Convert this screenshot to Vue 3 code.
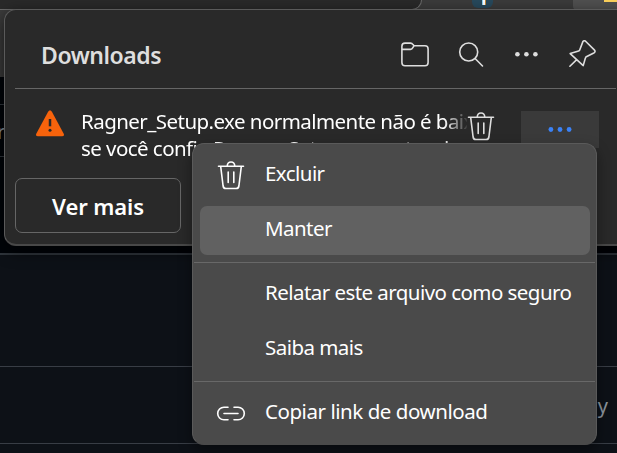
<script setup>
const headerIcons = ['folder', 'search', 'more', 'pin']
const menu = [
  { label: 'Excluir', icon: 'trash' },
  { label: 'Manter', active: true },
  { divider: true },
  { label: 'Relatar este arquivo como seguro' },
  { label: 'Saiba mais' },
  { divider: true },
  { label: 'Copiar link de download', icon: 'link', wide: true },
]
</script>

<template>
  <div class="screen">
    <div class="browser">
      <div class="address"></div>
      <div class="ext"><i></i></div>
      <div class="tab"><i></i></div>
    </div>
    <div class="page-head"><div class="band first"></div><div class="band second">r</div><div class="band third"></div></div>
    <div class="page-body">
      <div class="line-row tall"></div>
      <div class="line-row"><span>y</span></div>
    </div>

    <section class="panel">
      <header class="head">
        <h1>Downloads</h1>
        <nav class="tools">
          <template v-for="name in headerIcons" :key="name">
            <svg v-if="name === 'folder'" width="30" height="30" viewBox="0 0 30 30" class="stroke">
              <path d="M1.9 6.2Q1.9 3.1 5 3.1H10.5Q12 3.1 13 4.6L14 5.8H25Q28.1 5.8 28.1 8.9V22.5Q28.1 25.8 25 25.8H5Q1.9 25.8 1.9 22.5ZM1.9 9.4H10.5Q12 9.4 13 7.4L14 5.8" />
            </svg>
            <svg v-else-if="name === 'search'" width="30" height="30" viewBox="0 0 30 30" class="stroke">
              <circle cx="12.7" cy="12" r="9" /><path d="M19.1 18.5L26.5 26" />
            </svg>
            <svg v-else-if="name === 'more'" width="30" height="30" viewBox="0 0 30 30" class="dots">
              <circle cx="5.4" cy="14.3" r="2.3" /><circle cx="14.4" cy="14.3" r="2.3" /><circle cx="23.4" cy="14.3" r="2.3" />
            </svg>
            <svg v-else width="30" height="30" viewBox="0 0 30 30" class="stroke">
              <path d="M14.9 1.6Q16.3 -.1 18.1 1.7L26.3 9.9Q28 11.8 25.8 13L18.3 16.8Q17.6 17.2 17.4 18L15.2 25.6L2.2 13.6L10.6 11Q11.4 10.8 11.7 10ZM11.7 10L14.9 1.6M8.7 19.6L1.9 26.2" />
            </svg>
          </template>
        </nav>
      </header>

      <div class="item">
        <svg class="warn" width="28" height="28" viewBox="0 0 28 28">
          <path d="M12.1 1.8Q14 -1.2 15.9 1.8L27.6 23.4Q28.9 26.3 26 26.3H2Q-.9 26.3 .4 23.4Z" />
          <path class="mark" d="M14 9V16.3" /><circle class="dot" cx="14" cy="20.3" r="1.5" />
        </svg>
        <div class="message">
          <div class="line">Ragner_Setup.exe normalmente não é baixado.</div>
          <div class="line">se você confia Ragner_Setup.exe antes de</div>
        </div>
        <svg class="trash stroke" width="28" height="32" viewBox="0 0 28 32">
          <path d="M1.5 6.2H26.5M10.2 6Q10.5 2 14 2T17.8 6M3.7 6.5L6.1 26Q6.5 28.5 8.8 28.5H19.2Q21.5 28.5 21.9 26L24.3 6.5M11.2 12V22.5M16.8 12V22.5" />
        </svg>
        <button class="more">
          <svg width="30" height="30" viewBox="0 0 30 30"><circle cx="5.9" cy="14.5" r="2.4" /><circle cx="15" cy="14.5" r="2.4" /><circle cx="24.1" cy="14.5" r="2.4" /></svg>
        </button>
      </div>
      <button class="see"><span>Ver mais</span></button>
    </section>

    <div class="menu">
      <template v-for="(m, i) in menu" :key="i">
        <div v-if="m.divider" class="divider"></div>
        <div v-else class="option" :class="{ active: m.active, wide: m.wide }">
          <div class="glyph">
            <svg v-if="m.icon === 'trash'" class="stroke bin" width="28" height="32" viewBox="0 0 28 32">
              <path d="M1.5 6.2H26.5M10.2 6Q10.5 2 14 2T17.8 6M3.7 6.5L6.1 26Q6.5 28.5 8.8 28.5H19.2Q21.5 28.5 21.9 26L24.3 6.5M11.2 12V22.5M16.8 12V22.5" />
            </svg>
            <svg v-else-if="m.icon === 'link'" class="stroke" width="30" height="30" viewBox="0 0 30 30">
              <path d="M12 8.2H8A6.3 6.3 0 0 0 8 20.8H12M18 8.2H22A6.3 6.3 0 0 1 22 20.8H18M8 14.5H22" />
            </svg>
          </div>
          <span>{{ m.label }}</span>
        </div>
      </template>
    </div>
  </div>
</template>

<style>
body { margin: 0; background: #0d1117; overflow: hidden; }
</style>

<style scoped>
.screen { position: relative; width: 617px; height: 453px; overflow: hidden; background: #0d1117; font-family: "Noto Sans", "Open Sans", sans-serif; font-size: 20px; color: #fff; }
.screen * { box-sizing: border-box; }
.browser { height: 77px; background: #3b3b3b; display: flex; align-items: flex-start; }
.address { width: 425px; height: 10px; margin-left: -3px; background: #292929; border: solid #6b6b6b; border-width: 0 1.5px 1.5px 0; border-radius: 0 0 22px 0; }
.ext { width: 21px; height: 8px; margin-left: 50px; background: #27495c; border-radius: 0 0 6px 6px; }
.ext i { display: block; width: 4px; height: 5px; margin-left: 10px; background: linear-gradient(90deg, #8ed5f5 50%, #fff 50%); border-right: 1px solid #c28b3c; }
.tab { flex: 1; height: 10px; margin-left: 80px; background: #505050; border-radius: 0 0 0 4px; }
.tab i { display: block; height: 2px; margin-left: 31px; background: #ffd35c; }
.page-head { height: 176px; background: #010409; }
.band { border-bottom: 1px solid #30363d; }
.first { height: 28px; }
.second { height: 52px; line-height: 54px; color: #8b949e; margin-left: -3px; }
.third { border: 0; }
.page-body { border-top: 2px solid #30363d; }
.line-row { height: 77px; border-bottom: 1px solid #383d45; display: flex; justify-content: flex-end; align-items: center; padding-right: 9px; color: #8b949e; }
.line-row.tall { height: 112px; }
.panel { position: absolute; left: 4px; top: 9px; width: 640px; height: 237px; border: 1px solid #5a5a5a; border-bottom: 2px solid #484848; border-radius: 12px; background: #292929; box-shadow: 0 5px 16px rgba(0, 0, 0, .65); padding-left: 10px; }
.head { width: 601px; height: 79px; border-bottom: 1px solid #666; display: flex; justify-content: space-between; padding: 30px 18px 0 26px; }
h1 { margin: 0; font-size: 23px; line-height: 31px; font-weight: 600; color: #dedede; letter-spacing: -.45px; white-space: nowrap; }
.tools { display: flex; gap: 26px; }
svg { display: block; flex: none; }
.stroke { fill: none; stroke: #dedede; stroke-width: 1.6; stroke-linecap: round; stroke-linejoin: round; }
.dots { fill: #dedede; }
.item { display: flex; height: 89px; padding-left: 21px; }
.warn { margin-top: 21px; fill: #f7630c; }
.mark { stroke: #292929; stroke-width: 2.5; }
.dot { fill: #292929; }
.message { width: 386px; margin: 19px 0 0 17px; line-height: 27px; overflow: hidden; white-space: nowrap; mask-image: linear-gradient(90deg, #000 363px, transparent 388px); }
.line { font-size: 20.5px; letter-spacing: -.55px; }
.trash { margin: 22px 0 0 0; }
.more { width: 78px; height: 37px; margin: 22px 0 0 26px; padding: 0; border: 0; background: #3a3a3a; display: grid; place-items: center; fill: #3b82f6; }
.see { width: 166px; height: 55px; padding: 0; border: 1px solid #666; border-radius: 7px; background: transparent; font: 600 22px "Noto Sans", sans-serif; letter-spacing: -.1px; color: #fff; }
.menu { position: absolute; left: 192px; top: 143px; width: 405px; height: 302px; padding-top: 7px; border: 1px solid #5a5a5a; border-bottom-color: #4a4a4a; border-radius: 12px; background: #4a4a4a; box-shadow: 0 6px 14px rgba(0, 0, 0, .4); }
.option { height: 49px; margin: 0 6px 6px 7px; border-radius: 7px; display: flex; align-items: center; }
.option.active { background: #616161; }
.option .stroke { stroke: #fff; }
.option span { line-height: 28px; padding-bottom: 5px; white-space: nowrap; font-size: 20.5px; letter-spacing: -.55px; }
.option.wide span { letter-spacing: -.45px; }
.glyph { width: 65px; padding-left: 16px; }
.bin { margin-left: 1px; }
.divider { height: 1px; margin: 1px 1px 7px; background: #686868; }
.option + .divider { margin-top: 7px; }
.option:has(+ .divider) { margin-bottom: 0; }
</style>
